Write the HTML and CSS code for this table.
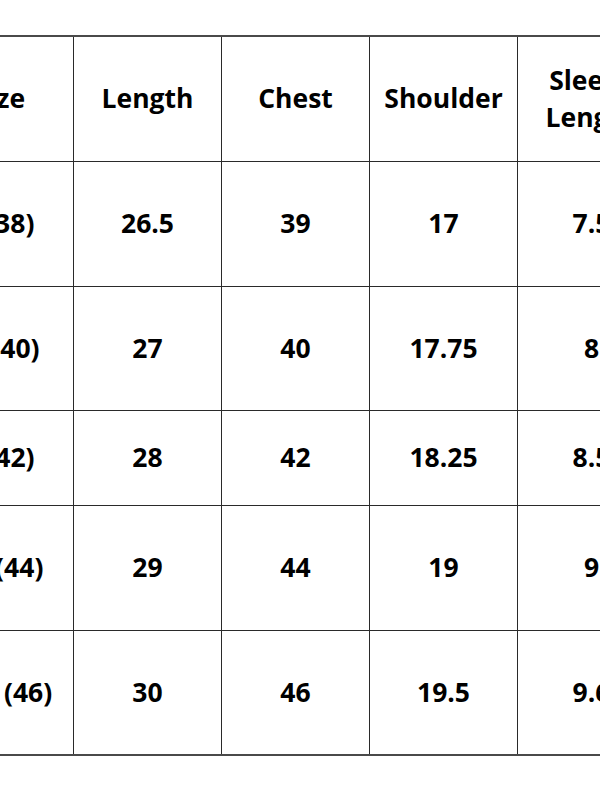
FILE: index.html
```html
<!DOCTYPE html>
<html>
<head>
<meta charset="utf-8">
<link rel="stylesheet" href="styles.css">
</head>
<body>
<div class="frame">
<table class="size-chart">
  <colgroup>
    <col class="col"><col class="col"><col class="col"><col class="col"><col class="col"><col class="col">
  </colgroup>
  <thead>
    <tr class="r-head">
      <th>Size</th><th>Length</th><th>Chest</th><th>Shoulder</th><th>Sleeve Length</th><th>Waist</th>
    </tr>
  </thead>
  <tbody>
    <tr class="r-a"><td>S (38)</td><td>26.5</td><td>39</td><td>17</td><td>7.5</td><td>36</td></tr>
    <tr class="r-b"><td>M (40)</td><td>27</td><td>40</td><td>17.75</td><td>8</td><td>38</td></tr>
    <tr class="r-c"><td>L (42)</td><td>28</td><td>42</td><td>18.25</td><td>8.5</td><td>40</td></tr>
    <tr class="r-a"><td>XL (44)</td><td>29</td><td>44</td><td>19</td><td>9</td><td>42</td></tr>
    <tr class="r-b"><td>XXL (46)</td><td>30</td><td>46</td><td>19.5</td><td>9.6</td><td>44</td></tr>
  </tbody>
</table>
</div>
</body>
</html>
```
FILE: styles.css
```css
html, body {
  margin: 0;
  padding: 0;
  background: #fff;
}
.frame {
  width: 600px;
  height: 800px;
  overflow: hidden;
  padding-top: 35px;
  box-sizing: border-box;
}
.size-chart {
  margin-left: -75px;
  border-collapse: collapse;
  table-layout: fixed;
  width: 888px;
  font-family: "Open Sans", "Liberation Sans", sans-serif;
  font-weight: 700;
  font-size: 26.5px;
  line-height: 37px;
  color: #000;
  border-top: 2px solid #4a4a4a;
  border-bottom: 2px solid #4a4a4a;
}
.col { width: 148px; }
.size-chart th,
.size-chart td {
  border-left: 1px solid #2a2a2a;
  border-right: 1px solid #2a2a2a;
  border-bottom: 1px solid #2a2a2a;
  text-align: center;
  vertical-align: middle;
  padding: 0 6px 1px;
  font-weight: 700;
}
.size-chart tbody tr:last-child td { border-bottom: 2px solid #4a4a4a; }
.r-head th { height: 123px; }
.r-a td { height: 123px; }
.r-b td { height: 122px; }
.r-c td { height: 93px; }
```
